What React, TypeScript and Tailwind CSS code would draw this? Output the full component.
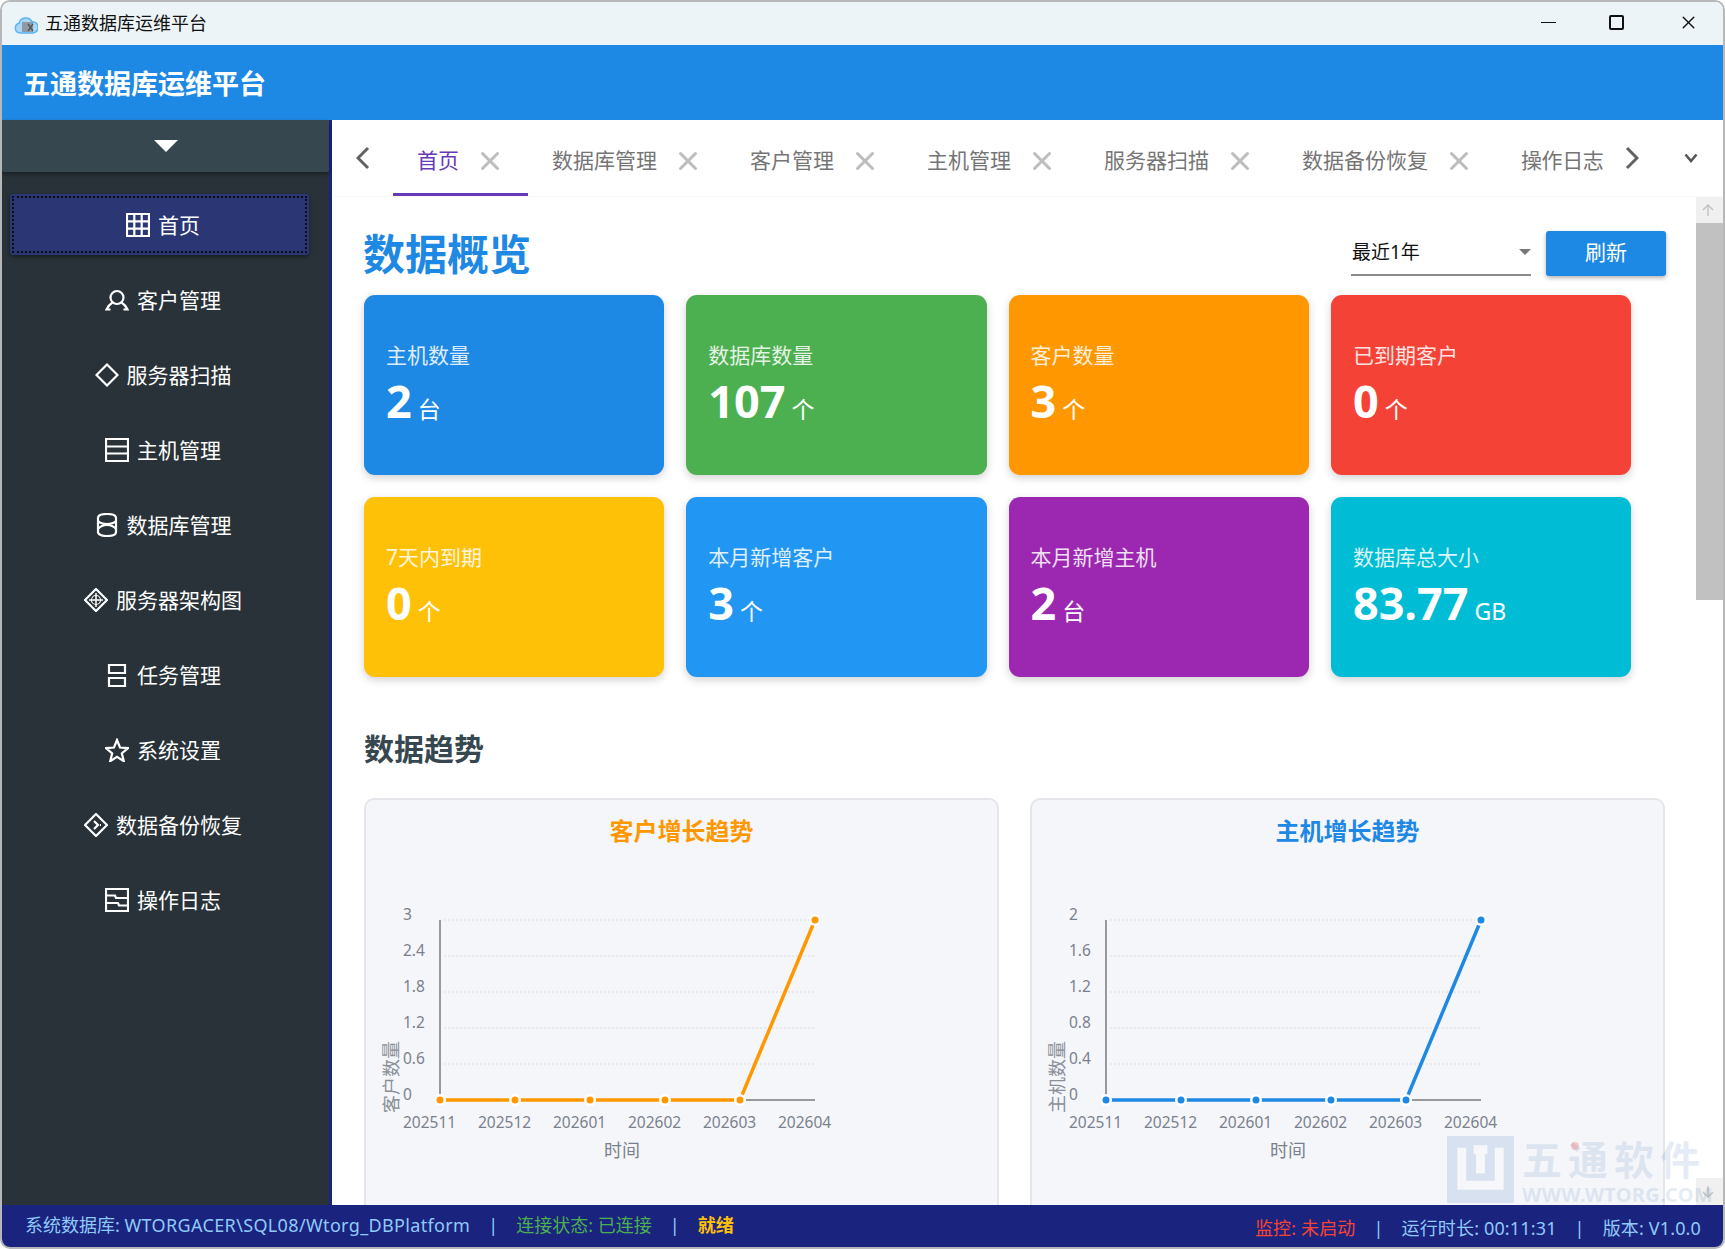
import { X } from "lucide-react";
import type { ReactNode } from "react";

const FONT = "font-['Noto_Sans','Noto_Sans_CJK_SC',sans-serif]";

const iconProps = {
  viewBox: "0 0 24 24",
  fill: "none",
  stroke: "currentColor",
  strokeWidth: 2.2,
  className: "w-[24px] h-[24px] shrink-0",
};

const icons: Record<string, ReactNode> = {
  grid: (
    <svg {...iconProps}>
      <path d="M1 1h22v22H1zM8.300 1v22M15.700 1v22M1 8.300h22M1 15.700h22" />
    </svg>
  ),
  user: (
    <svg {...iconProps}>
      <circle cx="12" cy="9.500" r="6.500" />
      <path d="M7.500 14.500C5 16 3 18.500 1.500 21.500h4M16.500 14.500c2.500 1.500 4.500 4 6 7h-4" />
    </svg>
  ),
  diamond: (
    <svg {...iconProps}>
      <path d="M12 1.500 22.500 12 12 22.500 1.500 12z" />
    </svg>
  ),
  host: (
    <svg {...iconProps}>
      <path d="M1 1h22v22H1zM1 8.500h22M1 15.500h22" />
    </svg>
  ),
  db: (
    <svg {...iconProps}>
      <path d="M3 5c0-2.500 4-4 9-4s9 1.500 9 4v14c0 2.500-4 4-9 4s-9-1.500-9-4zM3 8c2 2 5 3 9 3s7-1 9-3M3 16c2-2.500 5-4 9-4s7 1.500 9 4" />
    </svg>
  ),
  cross: (
    <svg {...iconProps}>
      <path d="M12 1 23 12 12 23 1 12z" />
      <path d="M12 5v14M5 12h14" strokeWidth="1.500" />
      <circle cx="12" cy="12" r="4.500" strokeWidth="1.200" />
    </svg>
  ),
  task: (
    <svg {...iconProps}>
      <path d="M4 2h16v8H4zM4 15h16v8H4z" />
    </svg>
  ),
  star: (
    <svg {...iconProps}>
      <path d="M12 2l3 7.500 8 .600-6.200 5.200 2 7.900-6.800-4.300-6.800 4.300 2-7.900L1 10.100l8-.600z" />
    </svg>
  ),
  key: (
    <svg {...iconProps}>
      <path d="M12 1 23 12 12 23 1 12zM10 8l4 4-4 4M17 12h-1" />
    </svg>
  ),
  log: (
    <svg {...iconProps}>
      <path d="M1 1h22v22H1zM1 7.500h9l1 2.500h12M1 15h12l1 2.500h9" />
    </svg>
  ),
};

const navItems = [
  { icon: "grid", label: "首页", active: true },
  { icon: "user", label: "客户管理" },
  { icon: "diamond", label: "服务器扫描" },
  { icon: "host", label: "主机管理" },
  { icon: "db", label: "数据库管理" },
  { icon: "cross", label: "服务器架构图" },
  { icon: "task", label: "任务管理" },
  { icon: "star", label: "系统设置" },
  { icon: "key", label: "数据备份恢复" },
  { icon: "log", label: "操作日志" },
];

const tabs = ["首页", "数据库管理", "客户管理", "主机管理", "服务器扫描", "数据备份恢复"];

const cards = [
  { title: "主机数量", value: "2", unit: "台", bg: "bg-[#1e88e5]" },
  { title: "数据库数量", value: "107", unit: "个", bg: "bg-[#4caf50]" },
  { title: "客户数量", value: "3", unit: "个", bg: "bg-[#ff9800]" },
  { title: "已到期客户", value: "0", unit: "个", bg: "bg-[#f44336]" },
  { title: "7天内到期", value: "0", unit: "个", bg: "bg-[#ffc107]" },
  { title: "本月新增客户", value: "3", unit: "个", bg: "bg-[#2196f3]" },
  { title: "本月新增主机", value: "2", unit: "台", bg: "bg-[#9c27b0]" },
  { title: "数据库总大小", value: "83.77", unit: "GB", bg: "bg-[#00bcd4]" },
];

const months = ["202511", "202512", "202601", "202602", "202603", "202604"];

function TrendChart({
  title,
  titleClass,
  color,
  yTitle,
  yLabels,
}: {
  title: string;
  titleClass: string;
  color: string;
  yTitle: string;
  yLabels: string[];
}) {
  const xs = [76, 151, 226, 301, 376, 451];
  const ys = [40, 76, 112, 148, 184, 220];
  return (
    <div className="h-[480px] rounded-[10px] border-2 border-[#e4e6ea] bg-[#f5f6fa]">
      <h3 className={`mt-[13px] text-center text-[24px] leading-[36px] font-bold ${titleClass}`}>{title}</h3>
      <svg width="631" height="300" className="mt-[31px] -ml-[2px]">
        {ys.slice(0, 5).map((y) => (
          <line key={y} x1="80" x2="451" y1={y} y2={y} stroke="#e3e5ea" strokeWidth="1.500" strokeDasharray="2 2" />
        ))}
        <line x1="76" x2="76" y1="40" y2="220" stroke="#999" strokeWidth="2" />
        <line x1="76" x2="451" y1="220" y2="220" stroke="#999" strokeWidth="2" />
        <polyline points="76,220 376,220 451,40" fill="none" stroke={color} strokeWidth="3.500" />
        {xs.map((x, i) => {
          const y = i === 5 ? 40 : 220;
          return (
            <g key={x}>
              <circle cx={x} cy={y} r="6" fill="#fff" />
              <circle cx={x} cy={y} r="3.500" fill={color} />
            </g>
          );
        })}
        <g fontSize="15.500" fill="#7b818c">
          {yLabels.map((l, i) => (
            <text key={l} x="39" y={ys[i] - 0.5}>
              {l}
            </text>
          ))}
          {months.map((m, i) => (
            <text key={m} x={39 + i * 75} y="248">
              {m}
            </text>
          ))}
        </g>
        <text x="258" y="277" fontSize="18" fill="#7b818c" textAnchor="middle">
          时间
        </text>
        <text transform="translate(34 197) rotate(-90)" fontSize="18" fill="#8a8f98" textAnchor="middle">
          {yTitle}
        </text>
      </svg>
    </div>
  );
}

export default function App() {
  return (
    <div className={`relative h-[1249px] w-[1725px] bg-white ${FONT}`}>
      <div className="flex h-full flex-col overflow-hidden rounded-[10px] border-2 border-[#b5b7b9]">
        {/* title bar */}
        <div className="flex h-[43px] shrink-0 items-center bg-[#ecf4f8] pl-[12px]">
          <svg viewBox="0 0 24 20" className="h-[20px] w-[24px]">
            <path d="M6 19a5 5 0 0 1-1-9.800 7 7 0 0 1 13-1.500A5.500 5.500 0 0 1 19 19z" fill="#a9d8f7" stroke="#5ab4f0" strokeWidth="1.500" />
            <rect x="8" y="8" width="11" height="10" fill="#8e9aa6" />
            <path d="M14 10l5 7M19 10l-5 7" stroke="#555" strokeWidth="1.300" />
          </svg>
          <span className="ml-[7px] pb-[2px] text-[18px] leading-none text-[#111]">五通数据库运维平台</span>
          <div className="ml-auto flex items-center pb-[2px] text-[#111]">
            <span className="mr-[53px] h-[1.500px] w-[15px] bg-[#111]" />
            <span className="mr-[54px] h-[15px] w-[15px] rounded-[2px] border-2 border-[#111]" />
            <X className="mr-[24px] h-[21px] w-[21px]" strokeWidth={1.6} />
          </div>
        </div>

        {/* header */}
        <div className="flex h-[75px] shrink-0 items-center bg-[#1e88e5] pl-[21px] pt-[1px]">
          <h1 className="text-[27px] font-bold leading-none text-white">五通数据库运维平台</h1>
        </div>

        <div className="flex min-h-0 flex-1">
          {/* sidebar */}
          <aside className="w-[330px] shrink-0 border-r-[3px] border-[#1a237e] bg-[#283238]">
            <div className="flex h-[52px] items-center justify-center rounded-b-[2px] bg-[#37474f] shadow-[0_2px_4px_rgba(0,0,0,0.4)]">
              <span className="h-0 w-0 border-x-[12px] border-t-[12px] border-x-transparent border-t-white" />
            </div>
            <nav className="mt-[22px]">
              {navItems.map((item) => (
                <div
                  key={item.label}
                  className={
                    item.active
                      ? "mx-[8px] mb-[14px] flex h-[61px] w-[299px] items-center justify-center gap-[8px] rounded-[3px] bg-[#2b3674] pl-[7px] text-[21px] text-white shadow-[0_2px_4px_rgba(0,0,0,0.4)] outline-2 -outline-offset-4 outline-[#0c0c14] outline-dotted"
                      : "mx-[8px] mb-[14px] flex h-[61px] w-[299px] items-center justify-center gap-[8px] pl-[7px] text-[21px] text-white"
                  }
                >
                  {icons[item.icon]}
                  <span className="pt-[2px]">{item.label}</span>
                </div>
              ))}
            </nav>
          </aside>

          {/* main */}
          <main className="flex min-w-0 flex-1 flex-col bg-white">
            <div className="flex h-[77px] shrink-0 items-center border-b border-[#fafafa]">
              <div className="flex w-[61px] shrink-0 justify-center">
                <svg viewBox="0 0 14 24" className="h-[24px] w-[14px]" fill="none" stroke="#616161" strokeWidth="3">
                  <path d="M12 2 2 12l10 10" />
                </svg>
              </div>
              <div className="flex h-full w-[1216px] shrink-0 overflow-hidden">
                {tabs.map((t, i) => (
                  <div
                    key={t}
                    className={
                      i === 0
                        ? "flex h-full shrink-0 items-center gap-[21px] border-b-[3px] border-[#673ab7] pl-[24px] pr-[28px] pt-[8px] text-[21px] text-[#673ab7]"
                        : "flex h-full shrink-0 items-center gap-[21px] border-b-[3px] border-transparent pl-[24px] pr-[28px] pt-[8px] text-[21px] text-[#757575]"
                    }
                  >
                    <span>{t}</span>
                    <X className="-mx-[5px] h-[30px] w-[30px] text-[#bdbdbd]" strokeWidth={2.4} />
                  </div>
                ))}
                <div className="flex h-full shrink-0 items-center border-b-[3px] border-transparent pl-[24px] pt-[8px] text-[21px] tracking-[-0.4px] text-[#757575]">操作日志</div>
              </div>
              <div className="flex w-[45px] shrink-0 justify-center">
                <svg viewBox="0 0 14 24" className="h-[24px] w-[14px]" fill="none" stroke="#616161" strokeWidth="3">
                  <path d="M2 2l10 10L2 22" />
                </svg>
              </div>
              <div className="flex flex-1 justify-center pl-[4px]">
                <svg viewBox="0 0 14 10" className="h-[10px] w-[14px]" fill="none" stroke="#555" strokeWidth="2.500">
                  <path d="M1.500 1.500 7 8l5.500-6.500" />
                </svg>
              </div>
            </div>

            <div className="flex min-h-0 flex-1">
              <div className="min-w-0 flex-1 overflow-hidden pl-[32px]">
                <div className="flex h-[98px] w-[1302px] items-center pt-[14px]">
                  <h2 className="-ml-[1px] mt-[2px] text-[42px] leading-none font-bold text-[#1e88e5]">数据概览</h2>
                  <div className="ml-auto mr-[15px] flex h-[46px] w-[180px] items-center justify-between border-b-2 border-[#8a8a8a] pl-[1px] text-[19px] text-[#111]">
                    <span>最近1年</span>
                    <span className="h-0 w-0 border-x-[6px] border-t-[6px] border-x-transparent border-t-[#777]" />
                  </div>
                  <button className="h-[45px] w-[120px] rounded-[3px] bg-[#1e88e5] text-[21px] text-white shadow-[0_2px_4px_rgba(0,0,0,0.3)]">
                    刷新
                  </button>
                </div>

                <div className="grid grid-cols-[repeat(4,300.3px)] gap-x-[22px] gap-y-[22px]">
                  {cards.map((c) => (
                    <div
                      key={c.title}
                      className={`flex h-[180px] flex-col justify-center rounded-[11px] pl-[22px] pt-[6px] text-white shadow-[0_3px_8px_rgba(0,0,0,0.18)] ${c.bg}`}
                    >
                      <div className="text-[21px] leading-[30px] opacity-85">{c.title}</div>
                      <div className="mt-[4px] flex items-baseline gap-[6px] leading-[54px]">
                        <span className="text-[45px] font-bold">{c.value}</span>
                        <span className="text-[23px]">{c.unit}</span>
                      </div>
                    </div>
                  ))}
                </div>

                <div className="flex h-[121px] items-center pt-[23px]">
                  <h2 className="text-[30px] leading-none font-bold text-[#37474f]">数据趋势</h2>
                </div>

                <div className="grid w-[1300px] grid-cols-[635px_635px] gap-x-[31px]">
                  <TrendChart
                    title="客户增长趋势"
                    titleClass="text-[#ff9800]"
                    color="#ff9800"
                    yTitle="客户数量"
                    yLabels={["3", "2.4", "1.8", "1.2", "0.6", "0"]}
                  />
                  <TrendChart
                    title="主机增长趋势"
                    titleClass="text-[#1e88e5]"
                    color="#1e88e5"
                    yTitle="主机数量"
                    yLabels={["2", "1.6", "1.2", "0.8", "0.4", "0"]}
                  />
                </div>
              </div>

              {/* scrollbar */}
              <div className="flex w-[27px] shrink-0 flex-col">
                <div className="flex h-[26px] items-center justify-center bg-[#f0f0f0] pr-[3px] text-[#c4c4c4]">
                  <svg viewBox="0 0 12 12" className="h-[12px] w-[12px]" fill="none" stroke="currentColor" strokeWidth="1.500">
                    <path d="M6 12V1M1 6l5-5 5 5" />
                  </svg>
                </div>
                <div className="h-[377px] bg-[#c1c1c1]" />
                <div className="flex-1 bg-white" />
                <div className="flex h-[27px] items-center justify-center bg-[#f0f0f0] pr-[3px] text-[#c4c4c4]">
                  <svg viewBox="0 0 12 12" className="h-[12px] w-[12px]" fill="none" stroke="currentColor" strokeWidth="1.500">
                    <path d="M6 0v11M1 6l5 5 5-5" />
                  </svg>
                </div>
              </div>
            </div>
          </main>
        </div>

        {/* status bar */}
        <div className="flex h-[42px] shrink-0 items-center justify-between bg-[#1a237e] pl-[23px] pr-[22px] text-[18px] text-[#90caf9]">
          <div className="flex items-center pb-[2px]">
            <span>
              系统数据库: <span className="tracking-[0.35px]">WTORGACER\SQL08/Wtorg_DBPlatform</span>
            </span>
            <span className="mx-[18px]">|</span>
            <span className="text-[#4caf50]">连接状态: 已连接</span>
            <span className="mx-[18px]">|</span>
            <span className="font-bold text-[#ffc107]">就绪</span>
          </div>
          <div className="flex items-center pt-[4px] tracking-[0.15px]">
            <span className="text-[#f44336]">监控: 未启动</span>
            <span className="mx-[18px]">|</span>
            <span>运行时长: 00:11:31</span>
            <span className="mx-[18px]">|</span>
            <span>版本: V1.0.0</span>
          </div>
        </div>
      </div>

      {/* watermark */}
      <div className="pointer-events-none absolute left-[1447px] top-[1136px] flex items-start gap-[8px]">
        <svg viewBox="0 0 68 68" className="h-[67px] w-[67px] opacity-[0.13]" fill="none" stroke="#1e5fa8" strokeWidth="9">
          <path d="M0 0h68v68H0z" fill="#1e5fa8" stroke="none" />
          <path d="M15 12v38h38V12M27 14h14M34 14v24" stroke="#fff" />
        </svg>
        <div className="relative flex flex-col text-[#1e5fa8]">
          <span className="mt-[-1px] text-[40px] leading-[50px] font-bold tracking-[6px] opacity-[0.11]">五通软件</span>
          <span className="text-[20px] leading-[20px] font-bold tracking-[0.3px] opacity-[0.11]">WWW.WTORG.COM</span>
          <span className="absolute left-[49px] top-[6px] h-[8px] w-[8px] rounded-full bg-[#f44336] opacity-[0.25]" />
        </div>
      </div>
    </div>
  );
}
